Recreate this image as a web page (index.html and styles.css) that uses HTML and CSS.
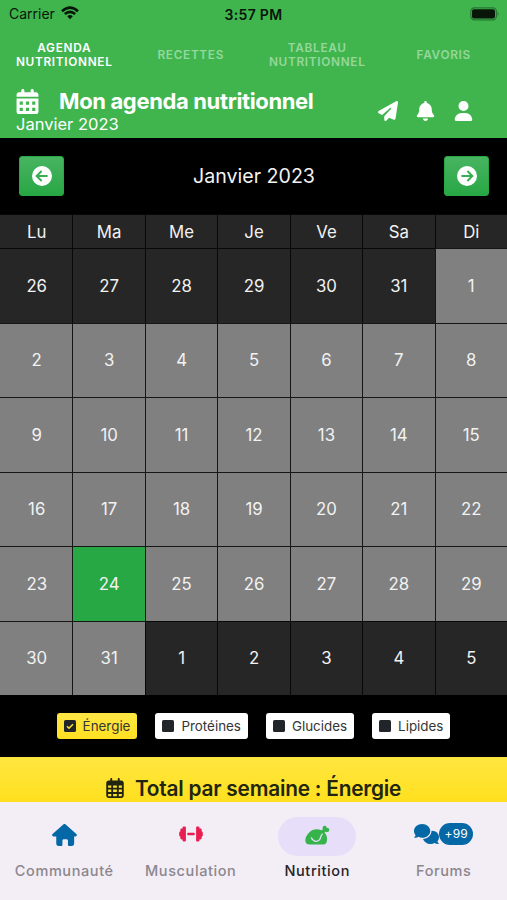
FILE: index.html
```html
<!DOCTYPE html>
<html lang="fr">
<head>
    <meta charset="UTF-8">
    <meta name="viewport" content="width=device-width, initial-scale=1.0">
    <title>Mon agenda nutritionnel</title>
    <link rel="stylesheet" href="styles.css">
</head>
<body>
    <header class="header">
        <div class="status-bar">
            <div class="carrier">
                <span>Carrier</span>
                <svg class="wifi" viewBox="0 0 18 14">
                    <path d="M1 5.2 Q9 -2 17 5.2" />
                    <path d="M3.8 8 Q9 3.6 14.2 8" />
                    <path class="wifi-dot" d="M6.2 10.2 Q9 8 11.8 10.2 L9 13.2z" />
                </svg>
            </div>
            <div class="time">3:57 PM</div>
            <div class="battery-wrap">
                <svg class="battery" viewBox="0 0 30 14">
                    <rect class="battery-frame" x="0.8" y="0.8" width="25.6" height="12" rx="3.6" />
                    <rect x="2" y="2.2" width="23" height="9.4" rx="2" />
                    <path class="battery-tip" d="M27.6 4.8 Q29.6 6.9 27.6 9z" />
                </svg>
            </div>
        </div>
        <nav class="tabs">
            <a class="tab tab-active">AGENDA<br>NUTRITIONNEL</a>
            <a class="tab">RECETTES</a>
            <a class="tab">TABLEAU<br>NUTRITIONNEL</a>
            <a class="tab">FAVORIS</a>
        </nav>
        <div class="title-bar">
            <div class="title-text">
                <div class="title-line">
                    <svg class="title-icon" viewBox="0 0 448 512"><path fill-rule="evenodd" d="M128 0c18 0 32 14 32 32v32h128V32c0-18 14-32 32-32s32 14 32 32v32h48c26 0 48 22 48 48v48H0v-48c0-26 22-48 48-48h48V32c0-18 14-32 32-32zM0 192h448v272c0 26-22 48-48 48H48c-26 0-48-22-48-48zm64 64v64h64v-64zm128 0v64h64v-64zm128 0v64h64v-64zM64 384v64h64v-64zm128 0v64h64v-64zm128 0v64h64v-64z" /></svg>
                    <h1>Mon agenda nutritionnel</h1>
                </div>
                <div class="subtitle">Janvier 2023</div>
            </div>
            <div class="actions">
                <svg viewBox="0 0 512 512"><path d="M498 6c11 7 16 19 14 31l-64 416c-2 10-8 18-16 23s-19 6-28 2l-120-50-68 74c-9 10-23 13-35 8s-21-17-21-30v-84c0-4 2-8 4-11l168-183c6-6 6-16 0-22s-15-6-22-1L106 360 18 316C7 310 0 300 0 288s6-23 16-29L464 4c11-6 24-5 34 2z" /></svg>
                <svg viewBox="0 0 448 512"><path d="M224 0c-18 0-32 14-32 32v19C119 66 64 131 64 208v19c0 47-17 92-48 128l-8 8c-8 10-10 23-5 34s16 19 29 19h384c13 0 24-8 29-19s3-24-5-34l-8-8c-31-36-48-81-48-128v-19c0-77-55-142-128-157V32c0-18-14-32-32-32zm45 493c12-12 19-28 19-45H160c0 17 7 33 19 45s28 19 45 19 33-7 45-19z" /></svg>
                <svg viewBox="0 0 448 512"><path d="M224 256a128 128 0 1 0 0-256 128 128 0 1 0 0 256zm-46 48C80 304 0 384 0 482c0 17 13 30 30 30h388c17 0 30-13 30-30 0-98-80-178-178-178z" /></svg>
            </div>
        </div>
    </header>

    <main class="agenda">
        <div class="month-nav">
            <button class="month-button" aria-label="Mois précédent">
                <svg viewBox="0 0 20 20"><circle cx="10" cy="10" r="10" /><path d="M15.6 10H4.8M9.6 5L4.6 10l5 5" /></svg>
            </button>
            <div class="month-name">Janvier 2023</div>
            <button class="month-button" aria-label="Mois suivant">
                <svg viewBox="0 0 20 20"><circle cx="10" cy="10" r="10" /><path d="M4.4 10h10.8M10.4 5l5 5-5 5" /></svg>
            </button>
        </div>

        <div class="calendar">
            <div class="cell other">Lu</div>
            <div class="cell other">Ma</div>
            <div class="cell other">Me</div>
            <div class="cell other">Je</div>
            <div class="cell other">Ve</div>
            <div class="cell other">Sa</div>
            <div class="cell other">Di</div>

            <div class="cell other">26</div>
            <div class="cell other">27</div>
            <div class="cell other">28</div>
            <div class="cell other">29</div>
            <div class="cell other">30</div>
            <div class="cell other">31</div>
            <div class="cell">1</div>

            <div class="cell">2</div>
            <div class="cell">3</div>
            <div class="cell">4</div>
            <div class="cell">5</div>
            <div class="cell">6</div>
            <div class="cell">7</div>
            <div class="cell">8</div>

            <div class="cell">9</div>
            <div class="cell">10</div>
            <div class="cell">11</div>
            <div class="cell">12</div>
            <div class="cell">13</div>
            <div class="cell">14</div>
            <div class="cell">15</div>

            <div class="cell">16</div>
            <div class="cell">17</div>
            <div class="cell">18</div>
            <div class="cell">19</div>
            <div class="cell">20</div>
            <div class="cell">21</div>
            <div class="cell">22</div>

            <div class="cell">23</div>
            <div class="cell today">24</div>
            <div class="cell">25</div>
            <div class="cell">26</div>
            <div class="cell">27</div>
            <div class="cell">28</div>
            <div class="cell">29</div>

            <div class="cell">30</div>
            <div class="cell">31</div>
            <div class="cell other">1</div>
            <div class="cell other">2</div>
            <div class="cell other">3</div>
            <div class="cell other">4</div>
            <div class="cell other">5</div>
        </div>

        <div class="filters">
            <button class="filter filter-active">
                <svg viewBox="0 0 12 12"><rect width="12" height="12" rx="1.6" /><path d="M3 6.2l2 2 4-4" /></svg>
                <span>Énergie</span>
            </button>
            <button class="filter">
                <svg viewBox="0 0 12 12"><rect width="12" height="12" rx="1.6" /></svg>
                <span>Protéines</span>
            </button>
            <button class="filter">
                <svg viewBox="0 0 12 12"><rect width="12" height="12" rx="1.6" /></svg>
                <span>Glucides</span>
            </button>
            <button class="filter">
                <svg viewBox="0 0 12 12"><rect width="12" height="12" rx="1.6" /></svg>
                <span>Lipides</span>
            </button>
        </div>

        <section class="total">
            <svg viewBox="0 0 448 512"><path fill-rule="evenodd" d="M128 0c13 0 24 11 24 24v40h144V24c0-13 11-24 24-24s24 11 24 24v40h40c35 0 64 29 64 64v320c0 35-29 64-64 64H64c-35 0-64-29-64-64V128c0-35 29-64 64-64h40V24c0-13 11-24 24-24zM48 192v56h80v-56zm128 0v56h96v-56zm144 0v56h80v-56zM48 296v64h80v-64zm128 0v64h96v-64zm144 0v64h80v-64zM48 408v40c0 9 7 16 16 16h64v-56zm128 0v56h96v-56zm144 0v56h64c9 0 16-7 16-16v-40z" /></svg>
            <h2>Total par semaine : Énergie</h2>
        </section>
    </main>

    <nav class="bottom-nav">
        <a class="nav-item">
            <div class="nav-icon">
                <svg class="home" viewBox="0 0 576 512"><path d="M576 256c0 18-15 32-32 32h-32l1 160c0 40-20 64-56 64h-57c-18 0-32-14-32-32v-96c0-18-14-32-32-32h-64c-18 0-32 14-32 32v96c0 18-14 32-32 32h-56c-36 0-56-24-56-64V288H32c-18 0-32-14-32-32 0-9 3-17 10-24L266 8c7-7 15-8 22-8s15 2 21 7l255 225c8 7 12 15 12 24z" /></svg>
            </div>
            <span>Communauté</span>
        </a>
        <a class="nav-item">
            <div class="nav-icon">
                <svg class="dumbbell" viewBox="0 0 24 16">
                    <rect x="3.6" y="0.5" width="3.3" height="15" rx="1" />
                    <rect x="17.1" y="0.5" width="3.3" height="15" rx="1" />
                    <rect x="1.3" y="2.6" width="4" height="10.8" rx="1.4" />
                    <rect x="18.7" y="2.6" width="4" height="10.8" rx="1.4" />
                    <rect x="0.2" y="5.4" width="3" height="5.2" rx="1.4" />
                    <rect x="20.8" y="5.4" width="3" height="5.2" rx="1.4" />
                    <rect x="8.2" y="6.7" width="7.6" height="2.6" rx="1" />
                </svg>
            </div>
            <span>Musculation</span>
        </a>
        <a class="nav-item nav-active">
            <div class="nav-icon">
                <svg class="chicken" viewBox="0 0 26 21"><path d="M4 8.2C7.2 4.4 12.4 3.7 17.2 5.4L18.6 4.4C17.6 2 19.6.1 21.3.9 22.2 1.3 22.5 2.2 22.4 3 24.5 2.6 26 4.4 25.2 6.1 24.4 7.8 22.3 7.9 21.2 7.1L20.4 8.2C22.8 10.4 23.6 14 22.8 17.2 22.2 19.6 20.6 20.5 18.4 20.5H5C1.6 20.5.2 18.6.2 16.2.2 13.2 1.8 10.6 4 8.2z" /><path class="chicken-leg" d="M6.4 13.2C7.8 17.2 12.2 18.6 15 15.6 16.9 13.5 16 10.8 18.4 9.2" /></svg>
            </div>
            <span>Nutrition</span>
        </a>
        <a class="nav-item">
            <div class="nav-icon nav-icon-badge">
                <svg class="chat" viewBox="0 0 640 512"><path d="M208 352c115 0 208-79 208-176S323 0 208 0 0 79 0 176c0 39 15 74 40 103-3 24-15 43-31 57-9 7-4 16 8 16 36 0 72-12 98-27 28 17 60 27 93 27zM448 176c0 112-99 196-216 207 24 74 102 129 200 129 34 0 66-10 93-23 26 15 62 23 98 23 12 0 17-9 9-17-16-16-28-33-32-56 25-29 40-64 40-103 0-91-83-165-192-160z" /></svg>
                <span class="badge">+99</span>
            </div>
            <span>Forums</span>
        </a>
    </nav>
</body>
</html>
```

FILE: styles.css
```css
* {
    margin: 0;
    box-sizing: border-box;
    font-family: 'Inter', sans-serif;
}

body {
    display: flex;
    flex-direction: column;
    width: 507px;
    height: 900px;
    overflow: hidden;
    background-color: black;
}

svg {
    display: block;
    fill: currentColor;
    flex-shrink: 0;
}

/* header */
.header {
    height: 138px;
    background-color: #40b54e;
    color: white;
}

.status-bar {
    display: grid;
    grid-template-columns: 1fr auto 1fr;
    align-items: center;
    height: 28px;
    padding: 0 7px;
    color: #08160a;
    font-size: 14px;
}

.carrier {
    display: flex;
    align-items: center;
    gap: 6px;
    padding: 0 0 2px 2px;
}

.wifi {
    width: 18px;
    height: 14px;
    fill: none;
    stroke: #08160a;
    stroke-width: 2.6;
}

.wifi-dot {
    fill: #08160a;
    stroke: none;
}

.time {
    font-weight: 600;
    font-size: 14px;
    letter-spacing: 0.3px;
}

.battery-wrap {
    display: flex;
    justify-content: flex-end;
    padding-bottom: 1px;
}

.battery {
    width: 30px;
    height: 14px;
}

.battery-frame {
    fill: none;
    stroke: #267532;
    stroke-width: 1.2;
}

.battery-tip {
    fill: #267532;
}

.tabs {
    display: grid;
    grid-template-columns: repeat(4, 1fr);
    align-items: center;
    height: 54px;
    padding-left: 1px;
}

.tab {
    color: #95d89c;
    font-size: 11.8px;
    font-weight: 600;
    line-height: 14.5px;
    letter-spacing: 0.7px;
    text-align: center;
    white-space: nowrap;
}

.tab-active {
    color: white;
}

.title-bar {
    display: flex;
    justify-content: space-between;
    padding: 6px 33px 0 16px;
}

.title-line {
    display: flex;
    align-items: center;
    gap: 20px;
    height: 26px;
}

.title-icon {
    width: 23px;
    height: 25px;
}

h1 {
    font-size: 22px;
    font-weight: 700;
    letter-spacing: -0.36px;
}

.subtitle {
    font-size: 16.5px;
    line-height: 20px;
}

.actions {
    display: flex;
    gap: 17px;
    padding-top: 13px;
}

.actions svg {
    width: 20px;
    height: 20px;
}

.actions svg + svg {
    width: 21px;
}

/* calendar */
.agenda {
    height: 664px;
}

.month-nav {
    display: flex;
    justify-content: space-between;
    align-items: center;
    height: 76px;
    padding: 0 18px 0 19px;
}

.month-button {
    display: flex;
    justify-content: center;
    align-items: center;
    width: 45px;
    height: 40px;
    padding: 0;
    border: 1px solid #28a745;
    border-radius: 3px;
    background: linear-gradient(#48b461, #28a745);
    color: white;
}

.month-button svg {
    width: 20px;
    height: 20px;
}

.month-button path {
    fill: none;
    stroke: #36ad50;
    stroke-width: 1.9;
}

.month-name {
    color: #f2f2f2;
    font-size: 19.6px;
}

.calendar {
    display: grid;
    grid-template-columns: repeat(7, 1fr);
    grid-template-rows: 34px repeat(6, 74.5px);
}

.cell {
    display: flex;
    justify-content: center;
    align-items: center;
    border-top: 1px solid #161616;
    border-left: 1px solid #161616;
    background-color: #808080;
    color: #f2f2f2;
    font-size: 16.8px;
}

.cell:nth-child(7n + 1) {
    padding-left: 1px;
    border-left: none;
}

.other {
    border-color: #080808;
    background-color: #262626;
}

.today {
    background-color: #28a745;
}

.filters {
    display: flex;
    justify-content: center;
    align-items: center;
    gap: 18px;
    height: 62px;
}

.filter {
    display: flex;
    align-items: center;
    gap: 7px;
    height: 26px;
    padding: 0 7px;
    border: none;
    border-radius: 3px;
    background-color: white;
    color: #343536;
    font-size: 13.4px;
}

.filter-active {
    background: linear-gradient(#ffe645, #ffe022);
}

.filter svg {
    width: 12px;
    height: 12px;
    fill: #212529;
}

.filter path {
    fill: none;
    stroke: #ffe332;
    stroke-width: 1.5;
}

.total {
    display: flex;
    justify-content: center;
    gap: 11px;
    height: 45px;
    padding-top: 19px;
    background: linear-gradient(#ffe640, #ffe01f);
    color: #212510;
}

.total svg {
    width: 18px;
    height: 20px;
    margin-top: 2px;
}

h2 {
    font-size: 20.8px;
    font-weight: 600;
    line-height: 25px;
    letter-spacing: -0.2px;
}

/* bottom navigation */
.bottom-nav {
    display: grid;
    grid-template-columns: repeat(4, 1fr);
    height: 98px;
    padding: 15px 0 0 1px;
    background-color: #f3edf6;
}

.nav-item {
    display: flex;
    flex-direction: column;
    align-items: center;
    gap: 5px;
    color: #8b878d;
    font-size: 14.5px;
    font-weight: 500;
    line-height: 20px;
    letter-spacing: 0.6px;
}

.nav-icon {
    display: flex;
    justify-content: center;
    align-items: center;
    width: 78px;
    height: 39px;
    border-radius: 20px;
    color: #0568a6;
}

.nav-active {
    color: #252329;
}

.nav-active .nav-icon {
    background-color: #e7dff9;
}

.home {
    width: 25px;
    height: 22px;
    margin-bottom: 4px;
}

.dumbbell {
    width: 24px;
    height: 16px;
    margin-bottom: 5px;
    color: #e91e50;
}

.chicken {
    width: 25px;
    height: 20px;
    margin-bottom: 4px;
    color: #36b34a;
}

.chicken-leg {
    fill: none;
    stroke: #e7dff9;
    stroke-width: 1.4;
}

.chat {
    width: 25px;
    height: 20px;
}

.nav-icon-badge {
    padding-bottom: 5px;
}

.badge {
    width: 34px;
    height: 22px;
    border-radius: 11px;
    background-color: #0568a6;
    color: white;
    font-size: 12px;
    font-weight: 400;
    line-height: 22px;
    letter-spacing: 0.2px;
    text-align: center;
}
```
